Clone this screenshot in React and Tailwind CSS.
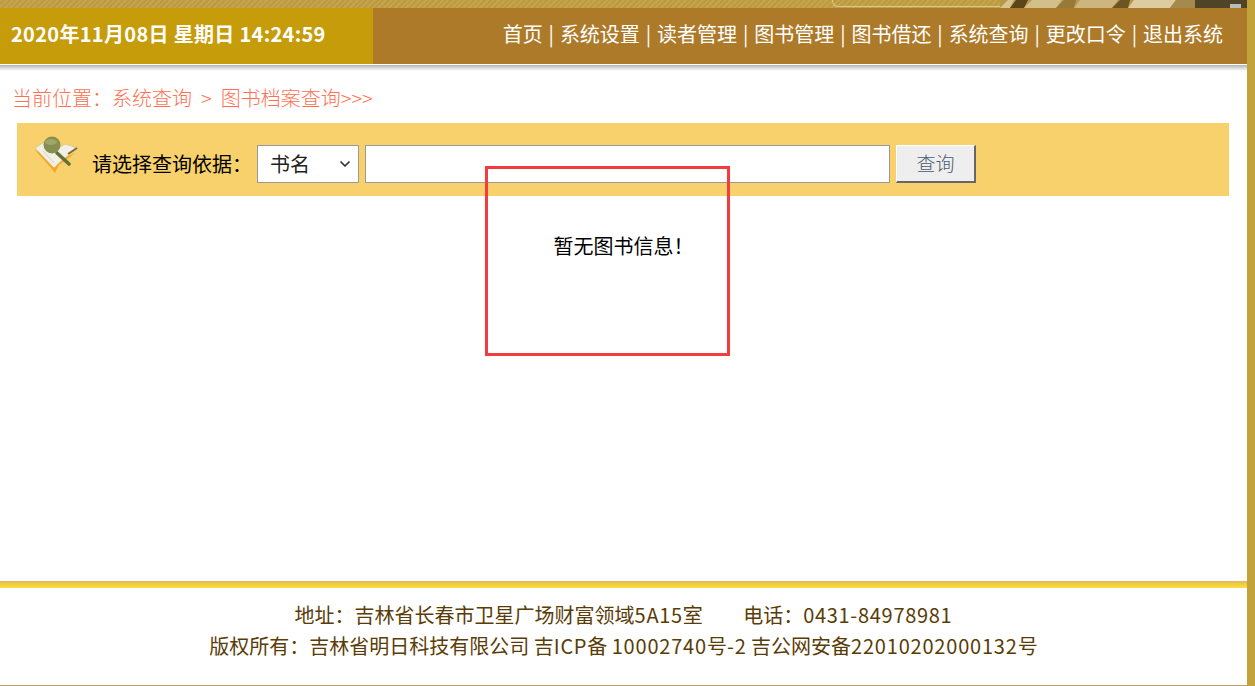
import React from "react";
import { ChevronDown } from "lucide-react";

const navItems = ["首页", "系统设置", "读者管理", "图书管理", "图书借还", "系统查询", "更改口令", "退出系统"];

const BookIcon = () => (
  <svg width="44" height="38" viewBox="0 0 44 38" className="block">
    <path d="M0 15 L16 33 L20 38 L24 30 L40 18 L22 26 Z" fill="#f5a623" />
    <path d="M0 13 L9 7 L22 14 L30 9 L42 13 L24 28 L19 33 Z" fill="#f2efe4" stroke="#c9b98a" strokeWidth="0.6" />
    <path d="M8 16 L19 28" stroke="#d9d2bd" strokeWidth="1" />
    <path d="M22 18 L34 29" stroke="#66703a" strokeWidth="3.6" strokeLinecap="round" />
    <path d="M33 19 L42 13" stroke="#7a6a45" strokeWidth="2" />
    <circle cx="17" cy="10" r="8.5" fill="#868f50" />
    <ellipse cx="16" cy="7" rx="6" ry="3" fill="#a0a568" />
  </svg>
);

const HeaderPhoto = () => (
  <svg viewBox="0 0 247 8" width="247" height="8" preserveAspectRatio="none" className="block">
    <rect width="247" height="8" fill="#b9964a" />
    <path d="M0 8 L8 0 L14 0 L10 8 Z" fill="#d8c48e" />
    <path d="M10 8 L16 0 L28 0 L24 8 Z" fill="#5a4618" />
    <path d="M24 8 L32 0 L62 0 L56 8 Z" fill="#d3bf8a" />
    <path d="M56 8 L64 0 L76 0 L74 8 Z" fill="#97793a" />
    <path d="M74 8 L80 0 L118 0 L112 8 Z" fill="#cdb67e" />
    <path d="M112 8 L120 0 L130 0 L128 8 Z" fill="#6b5524" />
    <path d="M128 8 L134 0 L176 0 L170 8 Z" fill="#dccca0" />
    <path d="M170 8 L176 0 L195 0 L195 8 Z" fill="#a48a4c" />
    <rect x="195" y="0" width="52" height="8" fill="#4f4426" />
    <rect x="230" y="4" width="11" height="4" fill="#b9bdb8" />
  </svg>
);

export default function App() {
  return (
    <div className="relative flex h-[686px] w-full overflow-hidden bg-white font-['Noto_Sans_CJK_SC','Liberation_Sans',sans-serif]">
      <div className="flex min-w-0 flex-1 flex-col">
        {/* top strip */}
        <div className="flex h-2 justify-end bg-[repeating-linear-gradient(135deg,#c4a44c_0px,#c4a44c_2px,#bb9a40_2px,#bb9a40_4px)]">
          <div className="h-[7px] w-[168px] rounded-bl-md border-b border-l border-[#dcc98a]" />
          <HeaderPhoto />
        </div>

        {/* header */}
        <div className="flex h-14 bg-[#ad7a2a] pb-1 text-white">
          <div className="-mb-1 flex w-[373px] items-center bg-[#c69c0b] pb-1 pl-[11px] text-[20px] font-bold tracking-[0.31px]">
            2020年11月08日 星期日 14:24:59
          </div>
          <nav className="flex flex-1 items-center justify-end pr-6 text-[20px]">
            {navItems.map((item, i) => (
              <span key={item}>
                {i > 0 && <span className="px-[5.9px]">|</span>}
                {item}
              </span>
            ))}
          </nav>
        </div>
        <div className="h-[7px] border-t border-white bg-gradient-to-b from-[#b4b4b4] to-white" />

        {/* breadcrumb */}
        <div className="mt-[13px] pl-3 text-[20px] leading-[28px] font-light whitespace-pre text-[#ff6f50]">
          当前位置：系统查询<span className="px-[9px]">&gt;</span>图书档案查询&gt;&gt;&gt;
        </div>

        {/* search bar */}
        <div className="mx-[17px] mt-[11px] flex h-[73px] w-[1212px] items-start bg-[#f8d16c]">
          <div className="mt-[12px] ml-[18px]">
            <BookIcon />
          </div>
          <span className="mt-[24px] ml-[13px] w-[165px] text-[20px] leading-[34px] text-black">请选择查询依据：</span>
          <div className="mt-[22px] flex h-[38px] w-[102px] items-center justify-between border border-[#999] bg-white pr-[5px] pl-3 text-[20px] text-[#222]">
            书名
            <ChevronDown size={16} strokeWidth={2.6} className="text-[#333]" />
          </div>
          <div className="mt-[22px] ml-[6px] h-[38px] w-[525px] border border-[#999] bg-white" />
          <button className="mt-[22px] ml-[6px] h-[38px] w-20 border-t border-r-2 border-b-2 border-l border-t-white border-r-[#666] border-b-[#666] border-l-white bg-[#eeeeee] text-[19px] font-light text-[#4a5a70]">
            查询
          </button>
        </div>

        {/* empty state */}
        <div className="flex flex-1 justify-center pt-[36px] text-[20px] leading-[28px] text-black">
          暂无图书信息！
        </div>

        {/* footer */}
        <div className="h-[7px] border-t border-[#e2bc5c] bg-gradient-to-b from-[#e8c04e] to-[#fbe03a]" />
        <div className="flex h-[97px] flex-col items-center pt-[11px] text-[20px] leading-[31px] text-[#5a3c06]">
          <div className="whitespace-pre">
            地址：吉林省长春市卫星广场财富领域<span className="tracking-[0.7px]">5A15</span>室{"         "}电话：<span className="tracking-[0.7px]">0431-84978981</span>
          </div>
          <div className="whitespace-pre">
            版权所有：吉林省明日科技有限公司 吉<span className="tracking-[0.7px]">ICP</span>备 <span className="tracking-[0.8px]">10002740</span>号<span className="tracking-[0.8px]">-2</span> 吉公网安备<span className="tracking-[0.8px]">22010202000132</span>号
          </div>
        </div>
        <div className="h-px bg-[#b8a060]" />
      </div>
      <div className="w-2 bg-[#c2a23a]" />

      {/* annotation box */}
      <div className="absolute top-[166px] left-[485px] h-[190px] w-[245px] border-[3px] border-[#f53c3c]" />
    </div>
  );
}
